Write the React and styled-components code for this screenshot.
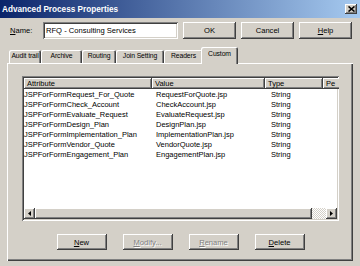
import React from "react";
import styled, { createGlobalStyle } from "styled-components";

const rows = [
  ["JSPForFormRequest_For_Quote", "RequestForQuote.jsp", "String"],
  ["JSPForFormCheck_Account", "CheckAccount.jsp", "String"],
  ["JSPForFormEvaluate_Request", "EvaluateRequest.jsp", "String"],
  ["JSPForFormDesign_Plan", "DesignPlan.jsp", "String"],
  ["JSPForFormImplementation_Plan", "ImplementationPlan.jsp", "String"],
  ["JSPForFormVendor_Quote", "VendorQuote.jsp", "String"],
  ["JSPForFormEngagement_Plan", "EngagementPlan.jsp", "String"],
];

const tabs = [
  { label: "Audit trail", width: 32 },
  { label: "Archive", width: 41 },
  { label: "Routing", width: 34 },
  { label: "Join Setting", width: 48 },
  { label: "Readers", width: 39 },
  { label: "Custom", width: 37, active: true },
];

const App = () => {
  return (
    <>
      <GlobalStyle />
      <StyledWindow>
        <StyledTitleBar>
          <StyledTitle>Advanced Process Properties</StyledTitle>
          <StyledClose>
            <svg width="7" height="6" viewBox="0 0 7 6">
              <path d="M0.5 0.5 L6.5 5.5 M6.5 0.5 L0.5 5.5" stroke="#000" strokeWidth="1.6" />
            </svg>
          </StyledClose>
        </StyledTitleBar>

        <StyledNameRow>
          <StyledLabel>
            <u>N</u>ame:
          </StyledLabel>
          <StyledInput>RFQ - Consulting Services</StyledInput>
          <StyledTopButtons>
            <StyledButton $w={53} $h={17}>OK</StyledButton>
            <StyledButton $w={53} $h={17}>Cancel</StyledButton>
            <StyledButton $w={53} $h={17}>
              <u>H</u>elp
            </StyledButton>
          </StyledTopButtons>
        </StyledNameRow>

        <StyledTabStrip>
          {tabs.map((t) => (
            <StyledTab key={t.label} $w={t.width} $active={t.active}>
              {t.label}
            </StyledTab>
          ))}
        </StyledTabStrip>

        <StyledPanel>
          <StyledList>
            <StyledHeader>
              <StyledHeaderCell>Attribute</StyledHeaderCell>
              <StyledHeaderCell>Value</StyledHeaderCell>
              <StyledHeaderCell>Type</StyledHeaderCell>
              <StyledHeaderCell>Pe</StyledHeaderCell>
            </StyledHeader>
            <StyledRows>
              {rows.map((r) => (
                <StyledRow key={r[0]}>
                  <span>{r[0]}</span>
                  <span>{r[1]}</span>
                  <span>{r[2]}</span>
                </StyledRow>
              ))}
            </StyledRows>
            <StyledScrollbar>
              <StyledArrow>
                <svg width="3" height="5" viewBox="0 0 3 5">
                  <path d="M3 0 L0 2.5 L3 5 Z" fill="#000" />
                </svg>
              </StyledArrow>
              <StyledThumb />
              <StyledTrack />
              <StyledArrow>
                <svg width="3" height="5" viewBox="0 0 3 5">
                  <path d="M0 0 L3 2.5 L0 5 Z" fill="#000" />
                </svg>
              </StyledArrow>
            </StyledScrollbar>
          </StyledList>

          <StyledButtonRow>
            <StyledButton $w={50} $h={16}>
              <u>N</u>ew
            </StyledButton>
            <StyledButton $w={50} $h={16} $disabled>
              <u>M</u>odify...
            </StyledButton>
            <StyledButton $w={50} $h={16} $disabled>
              <u>R</u>ename
            </StyledButton>
            <StyledButton $w={50} $h={16}>
              <u>D</u>elete
            </StyledButton>
          </StyledButtonRow>
        </StyledPanel>
      </StyledWindow>
    </>
  );
};

const raised = `
  box-shadow: inset -1px -1px #404040, inset 1px 1px #ffffff,
    inset -2px -2px #808080, inset 2px 2px #d4d0c8;
`;

const sunken = `
  box-shadow: inset 1px 1px #808080, inset -1px -1px #ffffff,
    inset 2px 2px #404040, inset -2px -2px #d4d0c8;
`;

const GlobalStyle = createGlobalStyle`
  * { box-sizing: border-box; }
  html, body {
    margin: 0;
    padding: 0;
    background: #d4d0c8;
  }
  body {
    font-family: "Liberation Sans", Arial, sans-serif;
    color: #000;
  }
`;

const StyledWindow = styled.div`
  width: 360px;
  height: 266px;
  background: #d4d0c8;
  display: flex;
  flex-direction: column;
  overflow: hidden;
`;

const StyledTitleBar = styled.div`
  height: 18px;
  background: linear-gradient(to right, #0a246a, #a6caf0);
  display: flex;
  align-items: center;
  justify-content: space-between;
  padding: 0 3px 0 2px;
`;

const StyledTitle = styled.span`
  color: #fff;
  font-weight: bold;
  font-size: 8.2px;
`;

const StyledClose = styled.div`
  width: 12px;
  height: 10px;
  background: #d4d0c8;
  ${raised}
  display: flex;
  align-items: center;
  justify-content: center;
`;

const StyledNameRow = styled.div`
  display: flex;
  align-items: center;
  margin-top: 4px;
  padding-left: 10px;
  height: 17px;
`;

const StyledLabel = styled.span`
  width: 33px;
  font-size: 7.6px;
`;

const StyledInput = styled.div`
  width: 135px;
  height: 17px;
  background: #fff;
  ${sunken}
  font-size: 7.6px;
  padding-left: 3px;
  display: flex;
  align-items: center;
`;

const StyledTopButtons = styled.div`
  display: flex;
  gap: 5px;
  margin-left: 5px;
`;

const StyledButton = styled.div`
  width: ${(p) => p.$w}px;
  height: ${(p) => p.$h}px;
  background: #d4d0c8;
  ${raised}
  font-size: 7.6px;
  display: flex;
  align-items: center;
  justify-content: center;
  color: ${(p) => (p.$disabled ? "#808080" : "#000")};
  text-shadow: ${(p) => (p.$disabled ? "1px 1px #ffffff" : "none")};
`;

const StyledTabStrip = styled.div`
  margin-top: 8px;
  height: 16px;
  display: flex;
  align-items: flex-end;
  padding-left: 9px;
`;

const StyledTab = styled.div`
  position: relative;
  z-index: ${(p) => (p.$active ? 1 : 0)};
  width: ${(p) => p.$w}px;
  height: ${(p) => (p.$active ? 17 : 13)}px;
  margin-bottom: ${(p) => (p.$active ? -1 : 0)}px;
  margin-left: ${(p) => (p.$active ? -2 : 0)}px;
  background: #d4d0c8;
  box-shadow: inset 1px 1px #ffffff, inset -1px 0 #404040, inset -2px 0 #808080;
  border-radius: 2px 2px 0 0;
  font-size: 6.8px;
  letter-spacing: -0.1px;
  white-space: nowrap;
  display: flex;
  justify-content: center;
  padding-top: ${(p) => (p.$active ? 3 : 2)}px;
`;

const StyledPanel = styled.div`
  margin: 0 7px;
  height: 198px;
  box-shadow: inset 1px 1px #ffffff, inset -1px -1px #404040,
    inset -2px -2px #808080;
  padding: 13px 14px 0 15px;
  display: flex;
  flex-direction: column;
`;

const StyledList = styled.div`
  width: 317px;
  height: 145px;
  background: #fff;
  ${sunken}
  padding: 2px;
  display: flex;
  flex-direction: column;
  overflow: hidden;
`;

const StyledHeader = styled.div`
  display: grid;
  grid-template-columns: 128px 113px 58px 60px;
  height: 11px;
  flex-shrink: 0;
`;

const StyledHeaderCell = styled.div`
  background: #d4d0c8;
  ${raised}
  font-size: 7.5px;
  line-height: 11px;
  padding-left: 3px;
  white-space: nowrap;
  overflow: hidden;
`;

const StyledRows = styled.div`
  flex: 1;
  padding-top: 1px;
`;

const StyledRow = styled.div`
  display: grid;
  grid-template-columns: 132px 115px 1fr;
  height: 10px;
  font-size: 7.5px;
  line-height: 10px;
  white-space: nowrap;
`;

const StyledScrollbar = styled.div`
  height: 11px;
  display: flex;
  flex-shrink: 0;
`;

const StyledArrow = styled.div`
  width: 11px;
  height: 11px;
  background: #d4d0c8;
  ${raised}
  display: flex;
  align-items: center;
  justify-content: center;
`;

const StyledThumb = styled.div`
  width: 277px;
  height: 11px;
  background: #d4d0c8;
  ${raised}
`;

const StyledTrack = styled.div`
  flex: 1;
  background: repeating-conic-gradient(#ffffff 0 25%, #d4d0c8 0 50%) 0 0 / 2px 2px;
`;

const StyledButtonRow = styled.div`
  margin-top: 13px;
  display: flex;
  justify-content: center;
  gap: 16px;
`;

export default App;
